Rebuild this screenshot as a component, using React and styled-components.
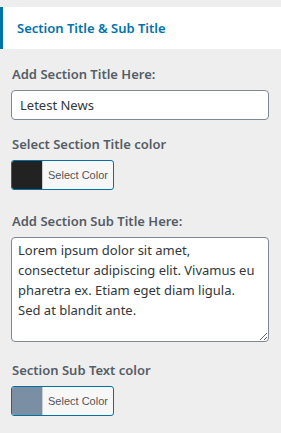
import React from 'react';
import styled, { createGlobalStyle } from 'styled-components';

const Global = createGlobalStyle`
  html, body {
    margin: 0;
    padding: 0;
    background: #eeeeee;
  }
  body {
    font-family: "Noto Sans", "Open Sans", sans-serif;
  }
`;

const Panel = styled.div`
  width: 281px;
  min-height: 433px;
  background: #eeeeee;
  padding-top: 7px;
  box-sizing: border-box;
`;

const SectionHeader = styled.div`
  height: 42px;
  background: #fff;
  border-left: 3px solid #0073aa;
  display: flex;
  align-items: center;
  padding-left: 14px;
  font-size: 13px;
  font-weight: 600;
  color: #0073aa;
`;

const Body = styled.div`
  padding: 16px 12px 0 11px;
  display: flex;
  flex-direction: column;
`;

const Control = styled.div`
  display: flex;
  flex-direction: column;
  margin-bottom: ${p => p.$gap || 15}px;
`;

const Label = styled.label`
  font-size: 13px;
  font-weight: 600;
  color: #555d66;
  line-height: 18px;
  margin: 0 0 7px 1px;
`;

const TextInput = styled.input`
  box-sizing: border-box;
  width: 258px;
  height: 30px;
  border: 1px solid #7e8993;
  border-radius: 4px;
  padding: 0 8px;
  font-family: inherit;
  font-size: 13px;
  color: #32373c;
  background: #fff;
  outline: none;
`;

const TextArea = styled.textarea`
  box-sizing: border-box;
  width: 258px;
  height: 105px;
  border: 1px solid #7e8993;
  border-radius: 4px;
  padding: 2px 9px 2px 6px;
  font-family: inherit;
  font-size: 13px;
  line-height: 20px;
  color: #32373c;
  background: #fff;
  resize: vertical;
  outline: none;
`;

const ColorButton = styled.button`
  box-sizing: border-box;
  display: flex;
  align-items: stretch;
  width: 103px;
  height: 30px;
  padding: 0;
  border: 1px solid #0071a1;
  border-radius: 3px;
  background: #f7f7f7;
  overflow: hidden;
  cursor: pointer;
`;

const Swatch = styled.span`
  width: 30px;
  background: ${p => p.$color};
  border-right: 1px solid #cccccc;
`;

const ButtonText = styled.span`
  flex: 1;
  display: flex;
  align-items: center;
  justify-content: center;
  font-family: inherit;
  font-size: 11px;
  color: #555555;
`;

const ColorPicker = ({ color }) => (
  <ColorButton type="button">
    <Swatch $color={color} />
    <ButtonText>Select Color</ButtonText>
  </ColorButton>
);

export default function App() {
  return (
    <Panel>
      <Global />
      <SectionHeader>Section Title &amp; Sub Title</SectionHeader>
      <Body>
        <Control>
          <Label>Add Section Title Here:</Label>
          <TextInput defaultValue="Letest News" />
        </Control>
        <Control $gap={22}>
          <Label>Select Section Title color</Label>
          <ColorPicker color="#222222" />
        </Control>
        <Control $gap={19}>
          <Label>Add Section Sub Title Here:</Label>
          <TextArea defaultValue="Lorem ipsum dolor sit amet, consectetur adipiscing elit. Vivamus eu pharetra ex. Etiam eget diam ligula. Sed at blandit ante." />
        </Control>
        <Control>
          <Label>Section Sub Text color</Label>
          <ColorPicker color="#7a8fa3" />
        </Control>
      </Body>
    </Panel>
  );
}
